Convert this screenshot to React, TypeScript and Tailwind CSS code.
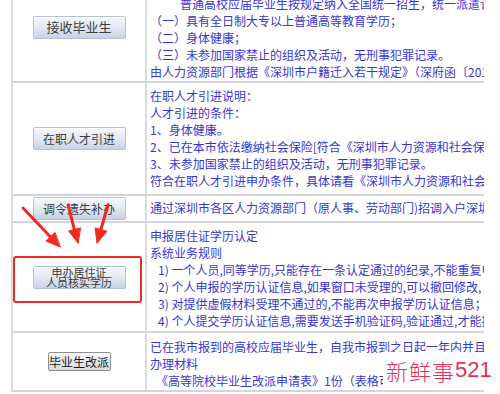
import React from "react";

const blueBtn =
  "w-[93px] h-[23px] rounded-[2px] border border-[#b3c2d6] bg-linear-to-b from-[#f6f8fc] via-[#e2e9f2] to-[#c6d3e5] text-[#3c3c3c] shadow-[inset_0_1px_0_#ffffff]";

function Row({
  h,
  pt,
  left,
  children,
}: {
  h: string;
  pt: string;
  left: React.ReactNode;
  children: React.ReactNode;
}) {
  return (
    <div className={`flex ${h} border-b-2 border-[#d3d6dd]`}>
      <div className="w-[134px] shrink-0 border-r-2 border-[#d8dbe2] flex items-center justify-center">
        {left}
      </div>
      <div
        className={`flex-1 min-w-0 overflow-hidden whitespace-nowrap pl-[3px] ${pt} text-[12px] leading-[17px] text-[#3636d6]`}
      >
        {children}
      </div>
    </div>
  );
}

export default function App() {
  return (
    <div className="relative w-[500px] h-[394px] overflow-hidden bg-white font-['Noto_Sans_CJK_SC','Noto_Sans',sans-serif]">
      {/* TABLE */}
      <div className="ml-[11px] mt-[-27px] w-[473px] border-l-2 border-[#d8dbe2]">
        <Row
          h="h-[110px]"
          pt="pt-[4.5px]"
          left={<button className={`${blueBtn} text-[13px]`}>接收毕业生</button>}
        >
          <div>接收毕业生说明：</div>
          <div className="pl-[30px]">普通高校应届毕业生按规定纳入全国统一招生，统一派遣计划，</div>
          <div>（一）具有全日制大专以上普通高等教育学历；</div>
          <div>（二）身体健康；</div>
          <div>（三）未参加国家禁止的组织及活动，无刑事犯罪记录。</div>
          <div>由人力资源部门根据《深圳市户籍迁入若干规定》（深府函〔2016〕</div>
        </Row>

        <Row
          h="h-[113px]"
          pt="pt-[3.5px]"
          left={<button className={`${blueBtn} text-[12px]`}>在职人才引进</button>}
        >
          <div>在职人才引进说明：</div>
          <div>人才引进的条件：</div>
          <div>1、身体健康。</div>
          <div>2、已在本市依法缴纳社会保险[符合《深圳市人力资源和社会保障局关于</div>
          <div>3、未参加国家禁止的组织及活动，无刑事犯罪记录。</div>
          <div>符合在职人才引进申办条件，具体请看《深圳市人力资源和社会保障局</div>
        </Row>

        <Row
          h="h-[27px]"
          pt="pt-[2.5px]"
          left={<button className={`${blueBtn} h-[22px] text-[12px]`}>调令遗失补办</button>}
        >
          <div>通过深圳市各区人力资源部门（原人事、劳动部门)招调入户深圳的人员</div>
        </Row>

        <Row
          h="h-[110px]"
          pt="pt-[3.5px]"
          left={
            <button className={`${blueBtn} flex flex-col items-center justify-center text-[11px] leading-[10px]`}>
              <span>申办居住证</span>
              <span>人员核实学历</span>
            </button>
          }
        >
          <div>申报居住证学历认定</div>
          <div>系统业务规则</div>
          <div className="pl-[8px]">1) 一个人员,同等学历,只能存在一条认定通过的纪录,不能重复申报;</div>
          <div className="pl-[8px]">2) 个人申报的学历认证信息,如果窗口未受理的,可以撤回修改,</div>
          <div className="pl-[8px]">3) 对提供虚假材料受理不通过的,不能再次申报学历认证信息；</div>
          <div className="pl-[8px]">4) 个人提交学历认证信息,需要发送手机验证码,验证通过,才能提交;</div>
        </Row>

        <Row
          h="h-[59px]"
          pt="pt-[4.5px]"
          left={
            <button className="w-[63px] h-[19px] rounded-[2px] border border-[#8e8e8e] bg-linear-to-b from-[#f8f8f8] to-[#dadada] text-[12px] leading-[17px] text-[#1a1a1a]">
              毕业生改派
            </button>
          }
        >
          <div>已在我市报到的高校应届毕业生，自我市报到之日起一年内并且</div>
          <div>办理材料</div>
          <div className="pl-[6px]">《高等院校毕业生改派申请表》1份（表格可在网站下载）</div>
        </Row>
      </div>

      {/* red highlight box */}
      <div className="absolute left-[13px] top-[256px] w-[129px] h-[47px] rounded-[3px] border-2 border-[#ee2a24]" />

      {/* arrows */}
      <svg className="absolute inset-0 pointer-events-none" width="500" height="394" viewBox="0 0 500 394">
        <g fill="#f02a22" stroke="#f02a22" strokeLinecap="round">
          <line x1="23" y1="208" x2="50.4" y2="236.8" strokeWidth="3" />
          <polygon points="60,247 46,241 54.8,232.7" strokeWidth="1" />
          <line x1="68" y1="205" x2="74.4" y2="229.5" strokeWidth="3" />
          <polygon points="78,243 68.6,231 80.2,228" strokeWidth="1" />
          <line x1="108" y1="205" x2="100.9" y2="229.5" strokeWidth="3" />
          <polygon points="97,243 95.1,227.9 106.7,231.2" strokeWidth="1" />
        </g>
      </svg>

      {/* watermark */}
      <div className="absolute left-[383px] top-[352px] w-[117px] h-[36px] bg-white flex items-center pl-[3px] text-[22px] leading-none text-[#e62f58] whitespace-nowrap">
        <span className="font-light tracking-[1px]">新鲜事</span>
        <span className="font-['Liberation_Sans',sans-serif]">521</span>
      </div>
    </div>
  );
}
